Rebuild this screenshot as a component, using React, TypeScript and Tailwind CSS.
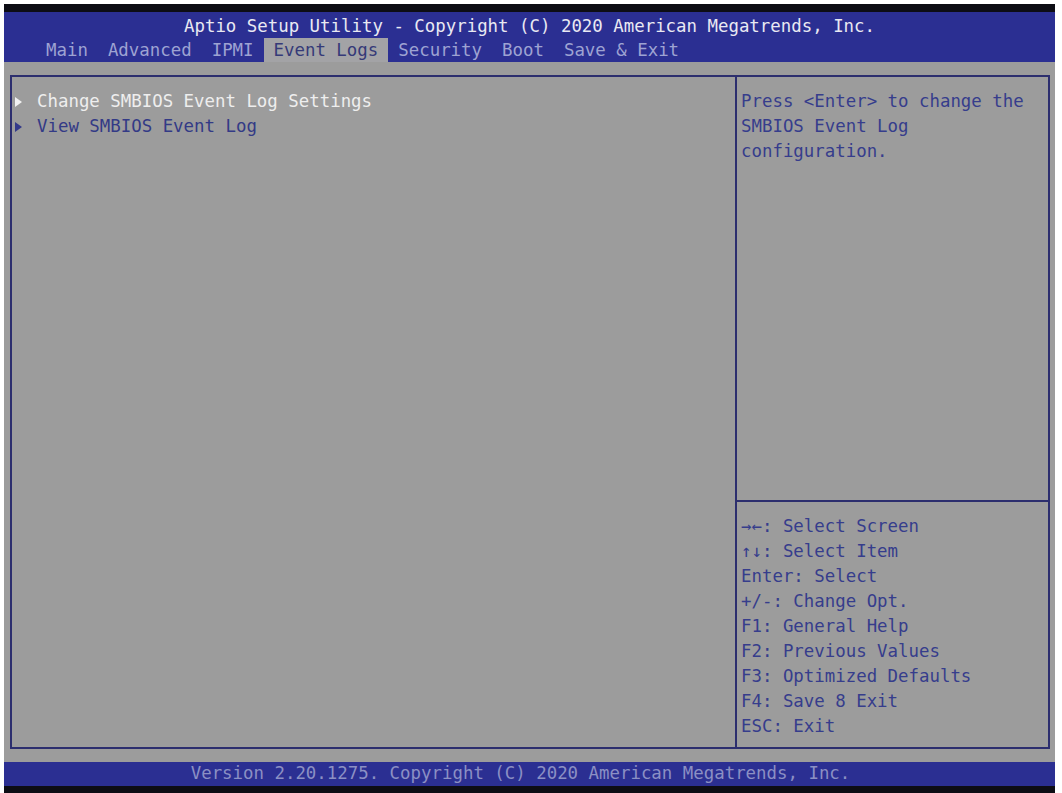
import React from "react";

const Arrow = ({ color }: { color: string }) => (
  <svg width="7" height="10" viewBox="0 0 7 10" className="shrink-0">
    <polygon points="0,0 7,5 0,10" fill={color} />
  </svg>
);

export default function App() {
  const tabs = ["Main", "Advanced", "IPMI", "Event Logs", "Security", "Boot", "Save & Exit"];
  const help = [
    "→←: Select Screen",
    "↑↓: Select Item",
    "Enter: Select",
    "+/-: Change Opt.",
    "F1: General Help",
    "F2: Previous Values",
    "F3: Optimized Defaults",
    "F4: Save 8 Exit",
    "ESC: Exit",
  ];
  return (
    <div
      className="w-[1062px] h-[793px] bg-white pl-[4px] pr-[7px] pt-[4px] flex flex-col overflow-hidden text-[17.4px]"
      style={{ fontFamily: '"DejaVu Sans Mono", "Liberation Mono", monospace' }}
    >
      <div className="h-[8px] bg-[#0d0d14]" />
      <div className="h-[50px] bg-[#2b2f92] flex flex-col">
        <div className="h-[26px] pt-[4px] flex items-center justify-center text-[#e9e9f2] whitespace-pre leading-none">
          Aptio Setup Utility - Copyright (C) 2020 American Megatrends, Inc.
        </div>
        <div className="h-[24px] flex items-stretch pl-[32px] whitespace-pre">
          {tabs.map((t) =>
            t === "Event Logs" ? (
              <span key={t} className="px-[10px] bg-[#a3a3a6] text-[#353a78] leading-[24px]">
                {t}
              </span>
            ) : (
              <span key={t} className="px-[10px] text-[#9ea3d2] leading-[24px]">
                {t}
              </span>
            )
          )}
        </div>
      </div>
      <div className="flex-1 bg-[#9c9c9c] pt-[13px] pb-[13px] pl-[6px] pr-[5px] flex">
        <div className="flex-1 border-2 border-[#2c2e6e] flex">
          <div className="w-[723px] pt-[12px] flex flex-col">
            <div className="h-[25px] flex items-center pl-[3px] text-[#eeeeee]">
              <div className="w-[22px] flex">
                <Arrow color="#f2f2f2" />
              </div>
              <span className="whitespace-pre">Change SMBIOS Event Log Settings</span>
            </div>
            <div className="h-[25px] flex items-center pl-[3px] text-[#333a86]">
              <div className="w-[22px] flex">
                <Arrow color="#343a8a" />
              </div>
              <span className="whitespace-pre">View SMBIOS Event Log</span>
            </div>
          </div>
          <div className="flex-1 border-l-2 border-[#2c2e6e] flex flex-col">
            <div className="flex-1 pt-[12px] pl-[4px] text-[#363d8c] leading-[25px] whitespace-pre">
              <div>Press &lt;Enter&gt; to change the</div>
              <div>SMBIOS Event Log</div>
              <div>configuration.</div>
            </div>
            <div className="h-[247px] border-t-2 border-[#2c2e6e] pt-[12px] pl-[4px] text-[#363d8c] leading-[25px] whitespace-pre">
              {help.map((h) => (
                <div key={h}>{h}</div>
              ))}
            </div>
          </div>
        </div>
      </div>
      <div className="h-[24px] bg-[#2b2f92] flex items-center justify-center pr-[18px] text-[#8b90c4] whitespace-pre leading-none">
        Version 2.20.1275. Copyright (C) 2020 American Megatrends, Inc.
      </div>
      <div className="h-[7px] bg-[#0d0d14]" />
    </div>
  );
}
